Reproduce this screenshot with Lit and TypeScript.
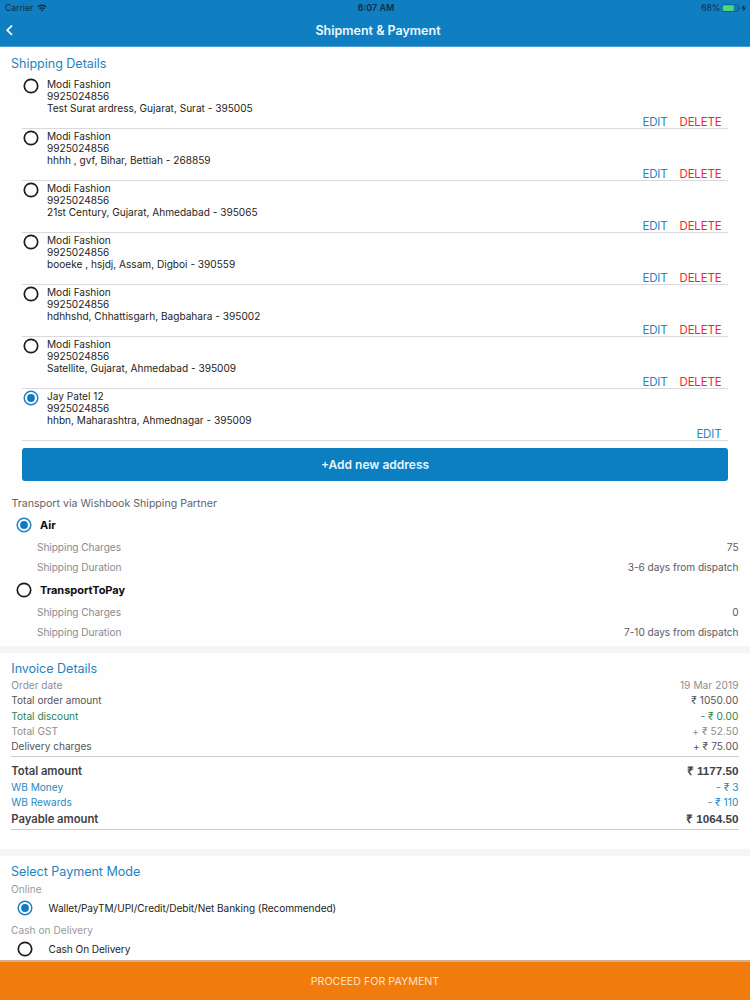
import { LitElement, html, css, svg } from "lit";
import { customElement, property } from "lit/decorators.js";
import { classMap } from "lit/directives/class-map.js";

@customElement("radio-dot")
class RadioDot extends LitElement {
  @property({ type: Boolean }) checked = false;
  static styles = css`
    :host { display: block; width: 16px; height: 16px; flex: none; }
    svg { display: block; }
    .off { fill: none; stroke: #1c1c1e; stroke-width: 1.7; }
    .on { fill: none; stroke: #1b82c3; stroke-width: 1.5; }
    .dot { fill: #1179bd; }
  `;
  render() {
    return html`<svg width="16" height="16" viewBox="0 0 16 16">
      ${this.checked
        ? svg`<circle class="on" cx="8" cy="8" r="6.8"/><circle class="dot" cx="8" cy="8" r="3.9"/>`
        : svg`<circle class="off" cx="8" cy="8" r="6.7"/>`}
    </svg>`;
  }
}

interface Address { name: string; place: string; selected?: boolean; }
interface Line { label: string; value: string; tone: string; }

@customElement("app-root")
class AppRoot extends LitElement {
  addresses: Address[] = [
    { name: "Modi Fashion", place: "Test Surat ardress, Gujarat, Surat - 395005" },
    { name: "Modi Fashion", place: "hhhh , gvf, Bihar, Bettiah - 268859" },
    { name: "Modi Fashion", place: "21st Century, Gujarat, Ahmedabad - 395065" },
    { name: "Modi Fashion", place: "booeke , hsjdj, Assam, Digboi - 390559" },
    { name: "Modi Fashion", place: "hdhhshd, Chhattisgarh, Bagbahara - 395002" },
    { name: "Modi Fashion", place: "Satellite, Gujarat, Ahmedabad - 395009" },
    { name: "Jay Patel 12", place: "hhbn, Maharashtra, Ahmednagar - 395009", selected: true },
  ];
  carriers = [
    { name: "Air", charges: "75", duration: "3-6 days from dispatch", selected: true },
    { name: "TransportToPay", charges: "0", duration: "7-10 days from dispatch", selected: false },
  ];
  charges: Line[] = [
    { label: "Order date", value: "19 Mar 2019", tone: "muted" },
    { label: "Total order amount", value: "₹ 1050.00", tone: "plain" },
    { label: "Total discount", value: "- ₹ 0.00", tone: "green" },
    { label: "Total GST", value: "+ ₹ 52.50", tone: "muted" },
    { label: "Delivery charges", value: "+ ₹ 75.00", tone: "plain" },
  ];
  totals: Line[] = [
    { label: "Total amount", value: "₹ 1177.50", tone: "strong" },
    { label: "WB Money", value: "- ₹ 3", tone: "blue" },
    { label: "WB Rewards", value: "- ₹ 110", tone: "blue" },
    { label: "Payable amount", value: "₹ 1064.50", tone: "strong" },
  ];

  static styles = css`
    :host {
      display: flex; flex-direction: column; width: 750px; height: 1000px; overflow: hidden;
      background: #fefefe; color: #1f1f21; font-family: Inter, "Liberation Sans", sans-serif;
      font-size: 10.1px; letter-spacing: 0; white-space: nowrap;
    }
    * { box-sizing: border-box; }
    svg { display: block; }
    header { height: 47px; flex: none; background: #107fc2; border-bottom: 1px solid #4c9fd0; }
    .status { display: grid; grid-template-columns: 1fr auto 1fr; height: 16px; line-height: 16px; padding: 0 3px 0 5px; font-size: 8.6px; color: #0b2f4c; }
    .carrier { display: flex; align-items: center; gap: 4px; letter-spacing: 0; }
    .time { font-size: 9px; font-weight: 600; letter-spacing: 0; }
    .power { display: flex; align-items: center; justify-content: flex-end; gap: 1px; letter-spacing: -0.1px; }
    .nav { display: grid; grid-template-columns: 42px 1fr 38px; align-items: center; height: 29px; padding: 0 3px 0 5px; }
    .title { text-align: center; color: #eef8fd; font-size: 12.5px; font-weight: 600; letter-spacing: 0; }
    h2 { margin: 0; font-size: 12.6px; height: 16px; line-height: 18px; font-weight: 400; letter-spacing: -0.05px; color: #1f84c0; }
    .shipping { height: 599px; flex: none; padding-top: 8px; }
    .shipping h2 { padding-left: 11px; height: 22px; }
    .list { padding: 0 22px; }
    .address { display: grid; grid-template-columns: 25px 1fr auto; height: 52px; border-bottom: 1px solid #d9d9dd; }
    .address radio-dot { margin: 1px 0 0 1px; }
    .lines { padding-top: 1px; line-height: 12.2px; }
    .links { display: flex; align-items: flex-end; gap: 12px; padding-right: 6.6px; font-size: 11.5px; line-height: 12px; letter-spacing: -0.18px; }
    .edit { color: #2688c2; }
    .delete { color: #f5261f; }
    .add { display: flex; align-items: center; justify-content: center; height: 33px; margin: 7px 22px 0; border-radius: 3px; background: #0c7fc1; color: #e6f5fc; font-size: 12px; font-weight: 600; letter-spacing: 0; }
    .via { margin: 14px 0 0 11.5px; height: 16px; line-height: 17px; font-size: 10.6px; letter-spacing: 0; color: #646466; }
    .carriers { padding-top: 3px; }
    .option { height: 64.8px; padding: 0 11.5px 0 16px; }
    .pick { display: flex; align-items: center; gap: 8px; height: 22px; margin-bottom: 2.2px; font-size: 11px; font-weight: 700; letter-spacing: -0.03px; color: #0d0d0e; }
    .fact { display: flex; justify-content: space-between; padding-left: 21px; height: 19.8px; line-height: 19.8px; letter-spacing: -0.05px; color: #8b8b8f; }
    .fact .val { color: #5b5b5e; letter-spacing: -0.03px; }
    .band { height: 7px; flex: none; background: #f5f5f7; }
    .invoice { height: 196px; flex: none; padding: 7px 11.5px 0 11.3px; }
    .row { display: flex; justify-content: space-between; height: 15.3px; line-height: 15.3px; }
    .row .amount { letter-spacing: 0.1px; }
    .muted { color: #8e8e91; }
    .plain { color: #555558; }
    .green { color: #2b8650; }
    .blue { color: #2a8ac4; }
    .strong { height: 17px; line-height: 17px; font-size: 11.3px; font-weight: 600; letter-spacing: -0.03px; color: #414144; }
    .strong .amount { line-height: 15px; font-family: "Liberation Sans", sans-serif; font-size: 11.7px; font-weight: 700; letter-spacing: 0; }
    .group { border-bottom: 1px solid #cbcbcf; }
    .charges { padding-top: 2px; height: 81px; }
    .totals { margin-top: 5px; padding-top: 1px; height: 68px; }
    .payment { flex: 1; min-height: 0; padding: 7px 11px 0; }
    .payment h2 { height: 16px; line-height: 17px; }
    .caption { height: 20px; line-height: 20px; letter-spacing: 0.05px; color: #9a9a9d; }
    .method { display: flex; align-items: center; gap: 15.6px; height: 18px; padding-left: 6px; margin-bottom: 3px; letter-spacing: -0.06px; }
    .method span { line-height: 16px; }
    footer { height: 40px; flex: none; background: #f27b0d; border-top: 2px solid #d3b08c; color: #fbe3c5; display: flex; align-items: center; justify-content: center; font-size: 10.7px; letter-spacing: 0; }
  `;

  private line(l: Line) {
    return html`<div class=${classMap({ row: true, [l.tone]: true })}><span>${l.label}</span><span class="amount">${l.value}</span></div>`;
  }

  render() {
    return html`
      <header>
        <div class="status">
          <div class="carrier"><span>Carrier</span>
            <svg width="10" height="8" viewBox="0 0 10 8" fill="none" stroke="#0b2f4c" stroke-width="1.4">
              <path d="M0.8 3.1C3.2 0.7 6.8 0.7 9.2 3.1M2.6 5C4 3.7 6 3.7 7.4 5"/><path d="M3.7 6.1Q5 5 6.3 6.1L5 7.6Z" fill="#0b2f4c" stroke="none"/>
            </svg>
          </div>
          <div class="time">6:07 AM</div>
          <div class="power"><span>68%</span>
            <svg width="26" height="9" viewBox="0 0 26 9">
              <rect x="1.3" y="0.8" width="15.9" height="6.6" rx="1.4" fill="none" stroke="#0d547f" stroke-width="0.8"/>
              <rect x="1.8" y="1.3" width="10.9" height="5.6" rx="0.8" fill="#4fd97a"/>
              <path d="M18.2 2.7Q19.6 4.1 18.2 5.5Z" fill="#0b2f4c"/>
              <path d="M23.4 0.5L20.4 4.5H22.5L22 7.7L25 3.6H22.9Z" fill="#0b2f4c"/>
            </svg>
          </div>
        </div>
        <div class="nav">
          <svg width="10" height="12" viewBox="0 0 10 12" fill="none" stroke="#e8f7fd" stroke-width="1.8"><path d="M7 0.5L2.2 5.2L7 9.9"/></svg>
          <div class="title">Shipment &amp; Payment</div>
        </div>
      </header>
      <section class="shipping">
        <h2>Shipping Details</h2>
        <div class="list">
          ${this.addresses.map((a) => html`<div class="address">
            <radio-dot ?checked=${a.selected}></radio-dot>
            <div class="lines"><div>${a.name}</div><div>9925024856</div><div>${a.place}</div></div>
            <div class="links"><span class="edit">EDIT</span>${a.selected ? "" : html`<span class="delete">DELETE</span>`}</div>
          </div>`)}
        </div>
        <div class="add">+Add new address</div>
        <div class="via">Transport via Wishbook Shipping Partner</div>
        <div class="carriers">
          ${this.carriers.map((c) => html`<div class="option">
            <div class="pick"><radio-dot ?checked=${c.selected}></radio-dot><span>${c.name}</span></div>
            <div class="fact"><span>Shipping Charges</span><span class="val">${c.charges}</span></div>
            <div class="fact"><span>Shipping Duration</span><span class="val">${c.duration}</span></div>
          </div>`)}
        </div>
      </section>
      <div class="band"></div>
      <section class="invoice">
        <h2>Invoice Details</h2>
        <div class="group charges">${this.charges.map((l) => this.line(l))}</div>
        <div class="group totals">${this.totals.map((l) => this.line(l))}</div>
      </section>
      <div class="band"></div>
      <section class="payment">
        <h2>Select Payment Mode</h2>
        <div class="caption">Online</div>
        <div class="method"><radio-dot checked></radio-dot><span>Wallet/PayTM/UPI/Credit/Debit/Net Banking (Recommended)</span></div>
        <div class="caption">Cash on Delivery</div>
        <div class="method"><radio-dot></radio-dot><span>Cash On Delivery</span></div>
      </section>
      <footer>PROCEED FOR PAYMENT</footer>
    `;
  }
}
